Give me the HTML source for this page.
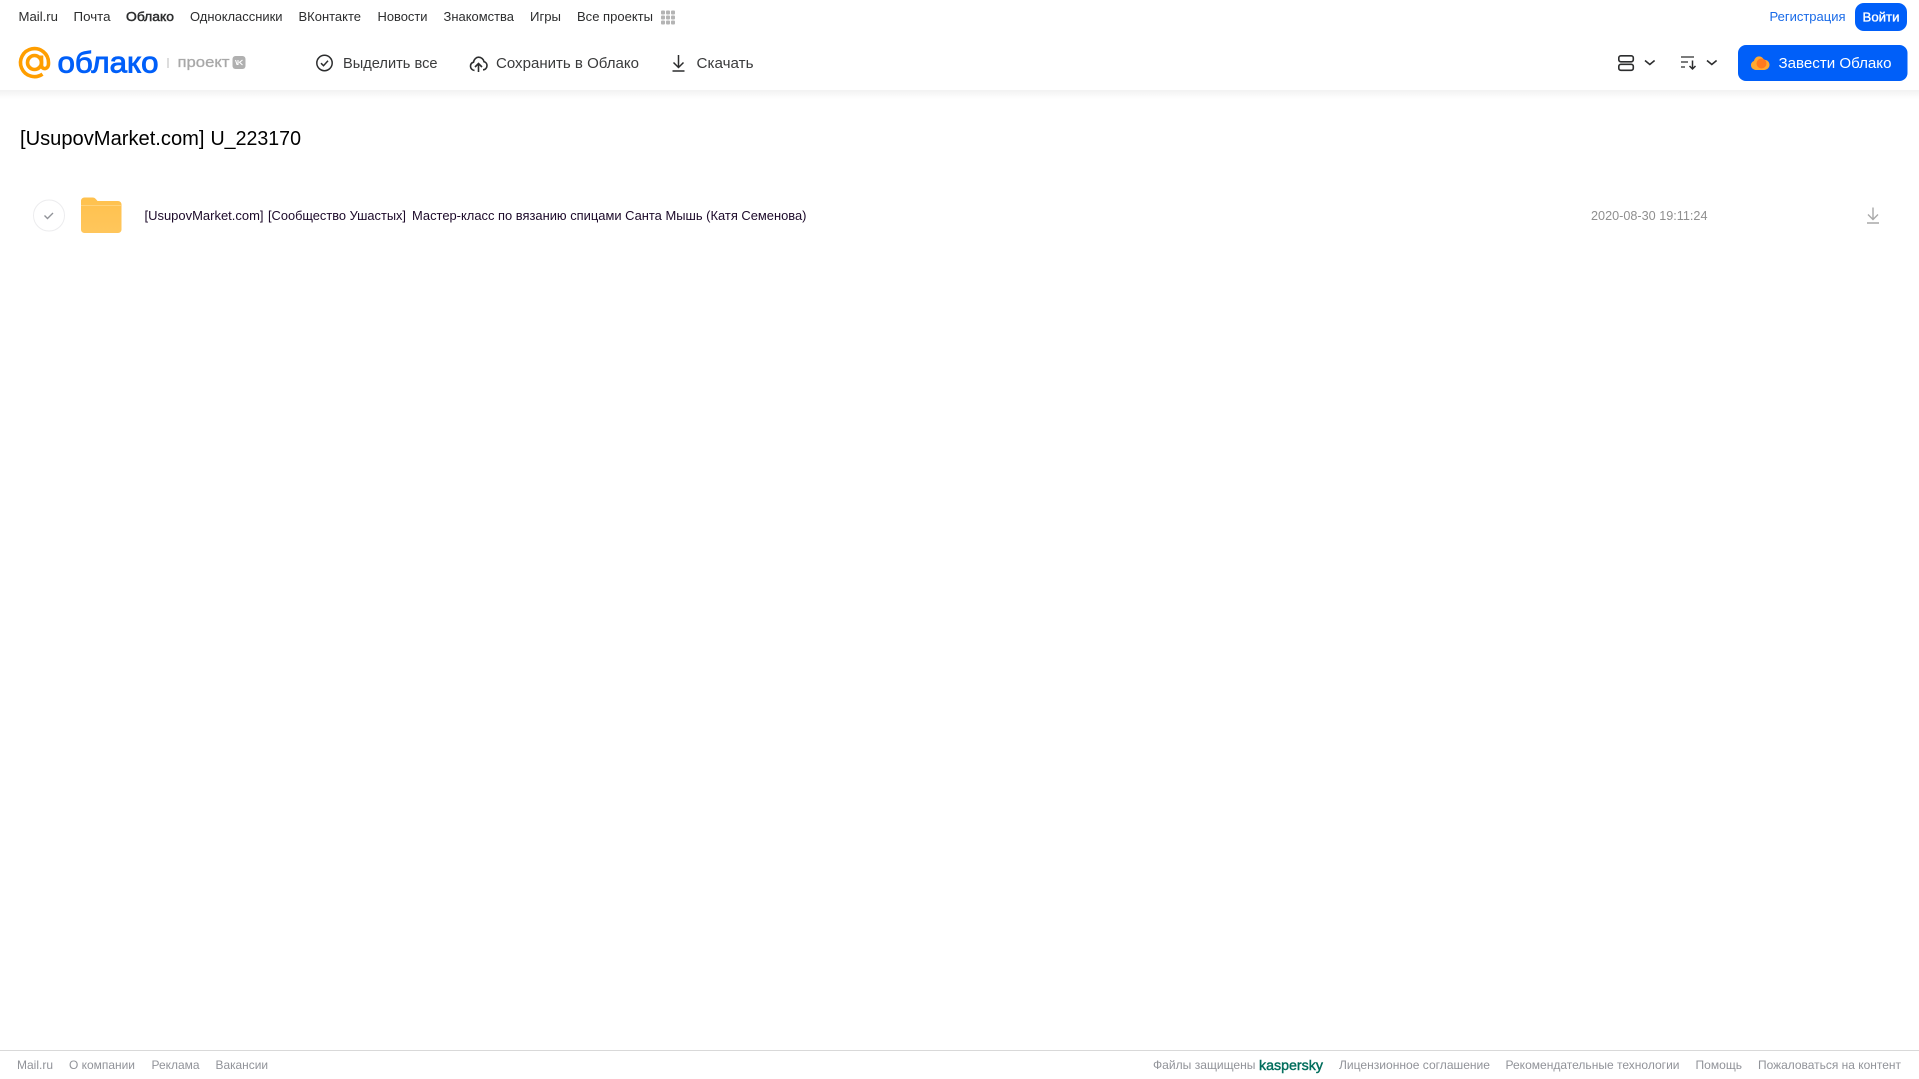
<!DOCTYPE html>
<html lang="ru">
<head>
<meta charset="utf-8">
<title>Облако</title>
<style>
html,body{margin:0;padding:0;background:#fff;width:1919px;height:1079px;overflow:hidden}
svg{display:block}
text{font-family:"Liberation Sans",Arial,sans-serif;dominant-baseline:auto}
.n{font-size:13px;fill:#2c2d2e}
.a{font-size:14.5px;fill:#3a3b3c}
.f{font-size:12px;fill:#919399}
</style>
</head>
<body>
<svg width="1919" height="1079" viewBox="0 0 1919 1079" xmlns="http://www.w3.org/2000/svg">
<defs>
<linearGradient id="sh" x1="0" y1="0" x2="0" y2="1"><stop offset="0" stop-color="#f2f2f2"/><stop offset="1" stop-color="#fff"/></linearGradient>
<linearGradient id="fo" x1="0" y1="0" x2="0" y2="1"><stop offset="0" stop-color="#ffc14d"/><stop offset="1" stop-color="#ffc65c"/></linearGradient>
</defs>
<rect width="1919" height="1079" fill="#fff"/>
<rect x="0" y="90" width="1919" height="9" fill="url(#sh)"/>

<!-- top nav -->
<text class="n" x="18.500" y="21" textLength="39.500" lengthAdjust="spacingAndGlyphs">Mail.ru</text>
<text class="n" x="73.500" y="21" textLength="37" lengthAdjust="spacingAndGlyphs">Почта</text>
<text class="n" x="126" y="21" textLength="48" lengthAdjust="spacingAndGlyphs" stroke="#2c2d2e" stroke-width=".45">Облако</text>
<text class="n" x="190" y="21" textLength="92.500" lengthAdjust="spacingAndGlyphs">Одноклассники</text>
<text class="n" x="298.500" y="21" textLength="62.500" lengthAdjust="spacingAndGlyphs">ВКонтакте</text>
<text class="n" x="377.500" y="21" textLength="50" lengthAdjust="spacingAndGlyphs">Новости</text>
<text class="n" x="443.500" y="21" textLength="70.500" lengthAdjust="spacingAndGlyphs">Знакомства</text>
<text class="n" x="530" y="21" textLength="31" lengthAdjust="spacingAndGlyphs">Игры</text>
<text class="n" x="577" y="21" textLength="76" lengthAdjust="spacingAndGlyphs">Все проекты</text>
<g fill="#b4b4b4">
<rect x="661" y="10.500" width="4" height="4" rx="1"/><rect x="666" y="10.500" width="4" height="4" rx="1"/><rect x="671" y="10.500" width="4" height="4" rx="1"/>
<rect x="661" y="15.500" width="4" height="4" rx="1"/><rect x="666" y="15.500" width="4" height="4" rx="1"/><rect x="671" y="15.500" width="4" height="4" rx="1"/>
<rect x="661" y="20.500" width="4" height="4" rx="1"/><rect x="666" y="20.500" width="4" height="4" rx="1"/><rect x="671" y="20.500" width="4" height="4" rx="1"/>
</g>
<text class="n" x="1769.500" y="21" textLength="76" lengthAdjust="spacingAndGlyphs" style="fill:#1a6be8">Регистрация</text>
<rect x="1855" y="3" width="52" height="28" rx="9" fill="#005ff9"/>
<text class="n" x="1862.500" y="21.500" textLength="37" lengthAdjust="spacingAndGlyphs" stroke="#fff" stroke-width=".35" style="fill:#fff">Войти</text>

<!-- logo -->
<g fill="none" stroke="#ff9e00" stroke-width="3.600">
<circle cx="34.500" cy="62.500" r="7"/>
<path d="M41.500 55.500v9.500c0 5 7 5 7-1.500v-1a14 14 0 1 0-6 11.600"/>
</g>
<text x="57.500" y="72.500" font-size="30" fill="#005ff9" stroke="#005ff9" stroke-width=".9" textLength="101" lengthAdjust="spacingAndGlyphs">облако</text>
<rect x="167.500" y="58" width="1" height="10" fill="#bbb"/>
<text x="177.500" y="67" font-size="14.500" fill="#a8a8a8" stroke="#a8a8a8" stroke-width=".3" textLength="52" lengthAdjust="spacingAndGlyphs">проект</text>
<rect x="232.500" y="56" width="13" height="13" rx="3" fill="#b0b0b0"/>
<path d="M235.500 60l1.500 4.500h1V60M242.500 60l-3 2.300 3 2.700" stroke="#fff" stroke-width="1.100" fill="none"/>

<!-- actions -->
<circle cx="324.500" cy="63" r="7.700" fill="none" stroke="#2c2d2e" stroke-width="1.500"/>
<path d="M321 63.200l2.500 2.500 4.500-5" fill="none" stroke="#2c2d2e" stroke-width="1.500"/>
<text class="a" x="343" y="68" textLength="94.500" lengthAdjust="spacingAndGlyphs">Выделить все</text>

<path d="M474.500 70.500c-2.500-.3-4-2.300-4-4.300 0-1.900 1.200-3.500 3-4 .5-3 2.800-5 5-5 2.800 0 5 2 5.500 4.500 1.800.4 3 2 3 3.800 0 2.200-1.600 4.300-4 4.300" fill="none" stroke="#2c2d2e" stroke-width="1.600"/>
<path d="M478.500 72v-8.500M475 67l3.500-3.500 3.500 3.500" fill="none" stroke="#2c2d2e" stroke-width="1.600"/>
<text class="a" x="496" y="68" textLength="143" lengthAdjust="spacingAndGlyphs">Сохранить в Облако</text>

<path d="M678.500 55v12.500M673.500 62.500l5 5 5-5M672.500 71h12" fill="none" stroke="#2c2d2e" stroke-width="1.500"/>
<text class="a" x="696.500" y="68" textLength="57" lengthAdjust="spacingAndGlyphs">Скачать</text>

<!-- right controls -->
<g fill="none" stroke="#2c2d2e" stroke-width="1.600">
<rect x="1618.800" y="55.800" width="14.500" height="6" rx="2"/>
<rect x="1618.800" y="64.300" width="14.500" height="6" rx="2"/>
<path d="M1645 60.500l4.800 4 4.800-4"/>
<path d="M1707 60.500l4.800 4 4.800-4"/>
</g>
<g fill="none" stroke="#2c2d2e" stroke-width="1.300">
<path d="M1681 57h13M1681 62h7M1681 67h4"/>
<path d="M1692.500 60.500v8.500M1689.500 66l3 3 3-3" stroke-width="1.500"/>
</g>

<rect x="1738" y="45" width="169.500" height="36" rx="8" fill="#005ff9"/>
<path d="M1757 70c-3.500 0-6-1.900-6-4.800 0-2.200 1.400-3.700 3-4.200.6-3 3-4.600 5-4.600 2.400 0 4 1.500 4.900 3.400 3-.1 5.600 2 5.600 5 0 3-2.500 5.200-5.500 5.200z" fill="#ffa930"/>
<circle cx="1761.500" cy="63.500" r="5" fill="#ff7a1f"/>
<text x="1778.500" y="68" font-size="14.500" fill="#fff" textLength="113" lengthAdjust="spacingAndGlyphs">Завести Облако</text>

<!-- title -->
<text x="20" y="145" font-size="20.500" fill="#000" textLength="184.500" lengthAdjust="spacingAndGlyphs">[UsupovMarket.com]</text>
<text x="210.500" y="145" font-size="20.500" fill="#000" textLength="90.500" lengthAdjust="spacingAndGlyphs">U_223170</text>

<!-- row -->
<circle cx="49" cy="215.500" r="15.500" fill="#fff" stroke="#ececee" stroke-width="1"/>
<path d="M44.500 215.500l3 3 5.500-5.500" fill="none" stroke="#919399" stroke-width="1.400"/>
<path d="M81 201c0-2 1.500-3.500 3.500-3.500h8c1.500 0 2.500.6 3.500 1.700l1.500 1.800h20.500c2 0 3.500 1.500 3.500 3.500v25c0 2-1.500 3.500-3.500 3.500h-33.500c-2 0-3.500-1.500-3.500-3.500z" fill="url(#fo)"/>
<rect x="81" y="205" width="40" height="1" fill="#ffd27a"/>
<text x="144.500" y="220" font-size="12.500" fill="#1c0a2a" textLength="119" lengthAdjust="spacingAndGlyphs">[UsupovMarket.com]</text>
<text x="268" y="220" font-size="12.500" fill="#1c0a2a" textLength="138" lengthAdjust="spacingAndGlyphs">[Сообщество Ушастых]</text>
<text x="412" y="220" font-size="12.500" fill="#1c0a2a" textLength="394.500" lengthAdjust="spacingAndGlyphs">Мастер-класс по вязанию спицами Санта Мышь (Катя Семенова)</text>
<text x="1591" y="220" font-size="12.500" fill="#8f8f8f" textLength="116.500" lengthAdjust="spacingAndGlyphs">2020-08-30 19:11:24</text>
<path d="M1873 207.500v12M1868 214.500l5 5 5-5M1867 223h12" fill="none" stroke="#a9a9a9" stroke-width="1.400"/>

<!-- footer -->
<rect x="0" y="1050" width="1919" height="1" fill="#d9d9d9"/>
<text class="f" x="17" y="1069" textLength="36" lengthAdjust="spacingAndGlyphs">Mail.ru</text>
<text class="f" x="69" y="1069" textLength="66" lengthAdjust="spacingAndGlyphs">О компании</text>
<text class="f" x="151.500" y="1069" textLength="48" lengthAdjust="spacingAndGlyphs">Реклама</text>
<text class="f" x="215.500" y="1069" textLength="52.500" lengthAdjust="spacingAndGlyphs">Вакансии</text>
<text class="f" x="1153" y="1069" textLength="102.500" lengthAdjust="spacingAndGlyphs">Файлы защищены</text>
<text x="1259" y="1070" font-size="13.500" fill="#006d5c" stroke="#006d5c" stroke-width=".4" textLength="64" lengthAdjust="spacingAndGlyphs">kaspersky</text>
<text class="f" x="1339" y="1069" textLength="151" lengthAdjust="spacingAndGlyphs">Лицензионное соглашение</text>
<text class="f" x="1505.500" y="1069" textLength="174" lengthAdjust="spacingAndGlyphs">Рекомендательные технологии</text>
<text class="f" x="1695.500" y="1069" textLength="46.500" lengthAdjust="spacingAndGlyphs">Помощь</text>
<text class="f" x="1758" y="1069" textLength="143" lengthAdjust="spacingAndGlyphs">Пожаловаться на контент</text>
</svg>
</body>
</html>
